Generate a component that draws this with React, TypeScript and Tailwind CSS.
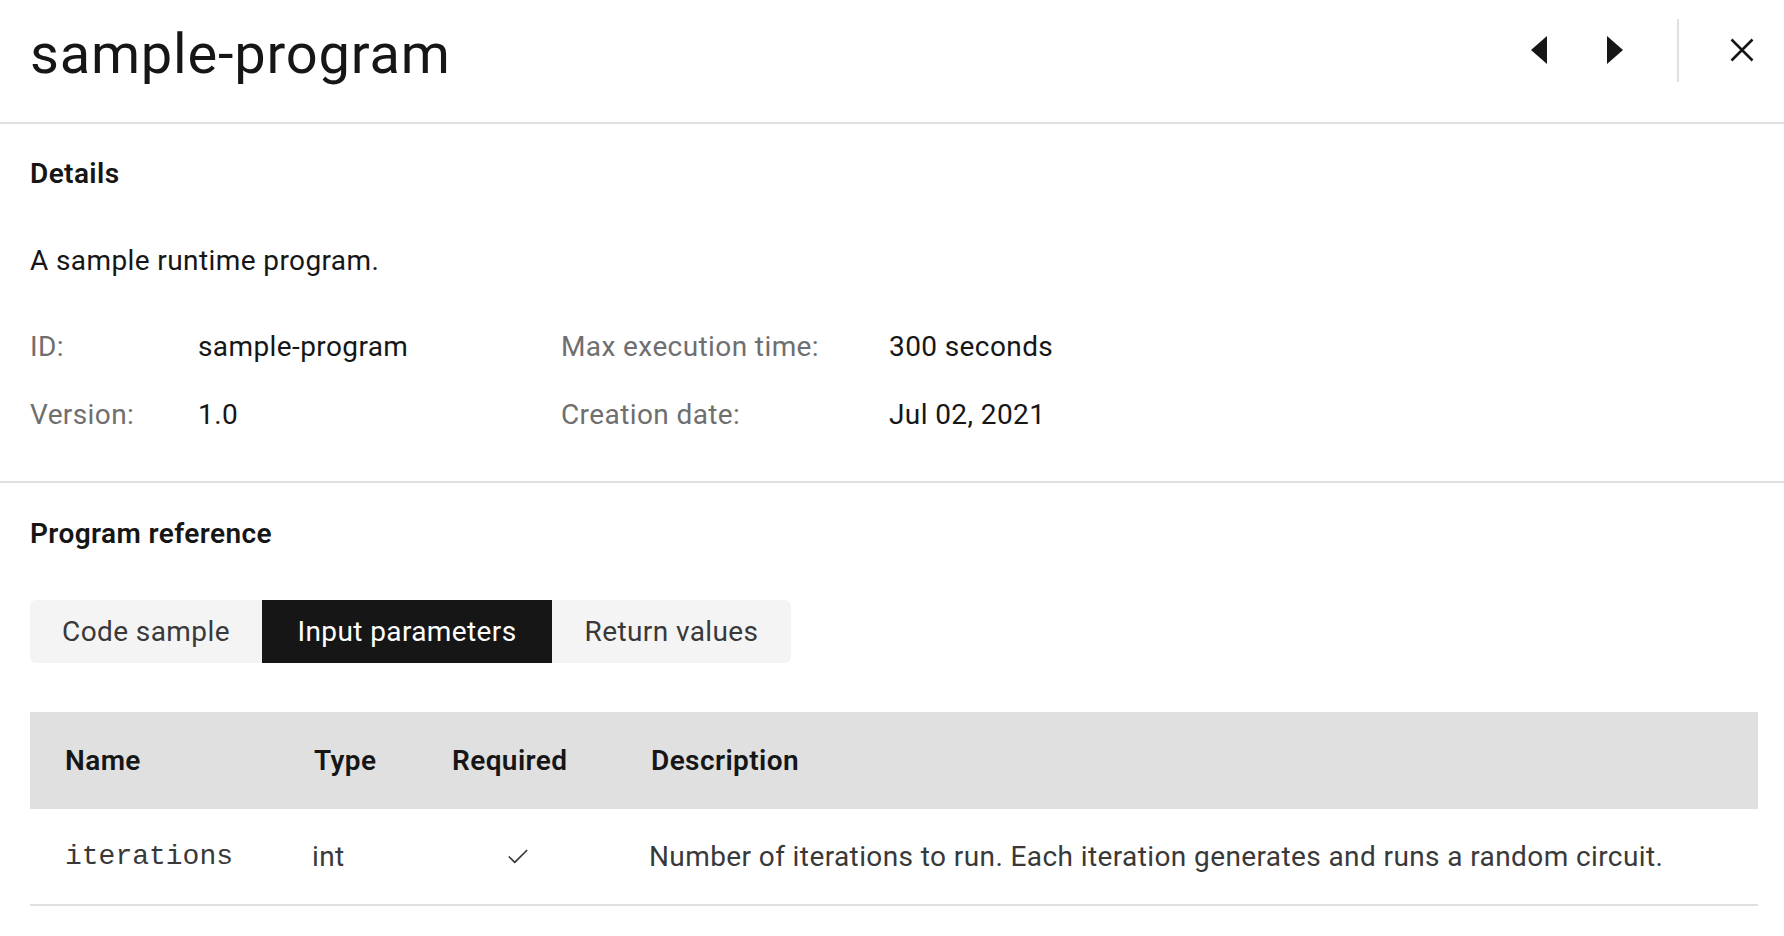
import { Check } from "lucide-react";

const font = { fontFamily: "Roboto, 'Liberation Sans', sans-serif" };

const details = [
  { label: "ID:", value: "sample-program", label2: "Max execution time:", value2: "300 seconds" },
  { label: "Version:", value: "1.0", label2: "Creation date:", value2: "Jul 02, 2021" },
];

const params = [
  {
    name: "iterations",
    type: "int",
    required: true,
    description: "Number of iterations to run. Each iteration generates and runs a random circuit.",
  },
];

const tabs = [
  { label: "Code sample", w: "w-[232px]" },
  { label: "Input parameters", w: "w-[290px]" },
  { label: "Return values", w: "w-[239px]" },
];

export default function App() {
  const active = "Input parameters";

  return (
    <div className="w-[1784px] h-[936px] bg-white text-[#161616] overflow-hidden tracking-[0.4px]" style={font}>
      {/* Header */}
      <div className="h-[124px] flex items-start justify-between border-b-2 border-[#e0e0e0]">
        <h1 className="pl-[30px] pt-[18px] text-[56px] leading-[72px] font-normal tracking-[0.8px]">
          sample-program
        </h1>
        <div className="flex items-center h-[100px]">
          <button className="w-[76px] h-[64px] flex items-center justify-center">
            <svg width="16" height="28" viewBox="0 0 16 28">
              <path d="M16 0 L0 14 L16 28 Z" fill="#161616" />
            </svg>
          </button>
          <button className="w-[76px] h-[64px] flex items-center justify-center">
            <svg width="16" height="28" viewBox="0 0 16 28">
              <path d="M0 0 L16 14 L0 28 Z" fill="#161616" />
            </svg>
          </button>
          <div className="w-[2px] h-[63px] bg-[#e0e0e0] ml-[24px]" />
          <button className="w-[105px] h-[64px] flex items-center justify-end pr-[30px]">
            <svg width="24" height="24" viewBox="0 0 24 24">
              <path d="M1.5 1.5 L22.5 22.5 M22.5 1.5 L1.5 22.5" stroke="#161616" strokeWidth="2.6" />
            </svg>
          </button>
        </div>
      </div>

      {/* Details */}
      <div className="px-[30px] border-b-2 border-[#e0e0e0] pb-[46px]">
        <h2 className="pt-[30px] text-[28px] leading-[40px] font-semibold">Details</h2>
        <p className="mt-[47px] text-[28px] leading-[40px]">A sample runtime program.</p>
        <div className="mt-[46px] grid grid-cols-[168px_363px_328px_1fr] gap-y-[28px] text-[28px] leading-[40px]">
          {details.map((d) => (
            <div key={d.label} className="contents">
              <span className="text-[#6f6f6f]">{d.label}</span>
              <span>{d.value}</span>
              <span className="text-[#6f6f6f]">{d.label2}</span>
              <span>{d.value2}</span>
            </div>
          ))}
        </div>
      </div>

      {/* Program reference */}
      <div className="px-[30px]">
        <h2 className="pt-[31px] text-[28px] leading-[40px] font-semibold">Program reference</h2>
        <div className="mt-[46px] inline-flex h-[63px] rounded-[6px] bg-[#f4f4f4] overflow-hidden">
          {tabs.map((t) => (
            <button
              key={t.label}
              className={
                t.label === active
                  ? `${t.w} bg-[#161616] text-white text-[28px]`
                  : `${t.w} text-[#393939] text-[28px]`
              }
            >
              {t.label}
            </button>
          ))}
        </div>

        {/* Table */}
        <div className="mt-[49px] w-[1728px]">
          <div className="grid grid-cols-[249px_139px_199px_1fr] h-[97px] items-center bg-[#e0e0e0] text-[28px] font-semibold">
            <span className="pl-[35px]">Name</span>
            <span className="pl-[35px]">Type</span>
            <span className="pl-[34px]">Required</span>
            <span className="pl-[34px]">Description</span>
          </div>
          {params.map((p) => (
            <div
              key={p.name}
              className="grid grid-cols-[249px_139px_199px_1fr] h-[97px] items-center border-b-2 border-[#e0e0e0] text-[28px] text-[#393939]"
            >
              <span className="pl-[35px] tracking-normal" style={{ fontFamily: "'Liberation Mono', monospace" }}>
                {p.name}
              </span>
              <span className="pl-[33px]">{p.type}</span>
              <span className="flex justify-center">
                {p.required && <Check size={26} strokeWidth={1.6} color="#393939" />}
              </span>
              <span className="pl-[32px]">{p.description}</span>
            </div>
          ))}
        </div>
      </div>
    </div>
  );
}
